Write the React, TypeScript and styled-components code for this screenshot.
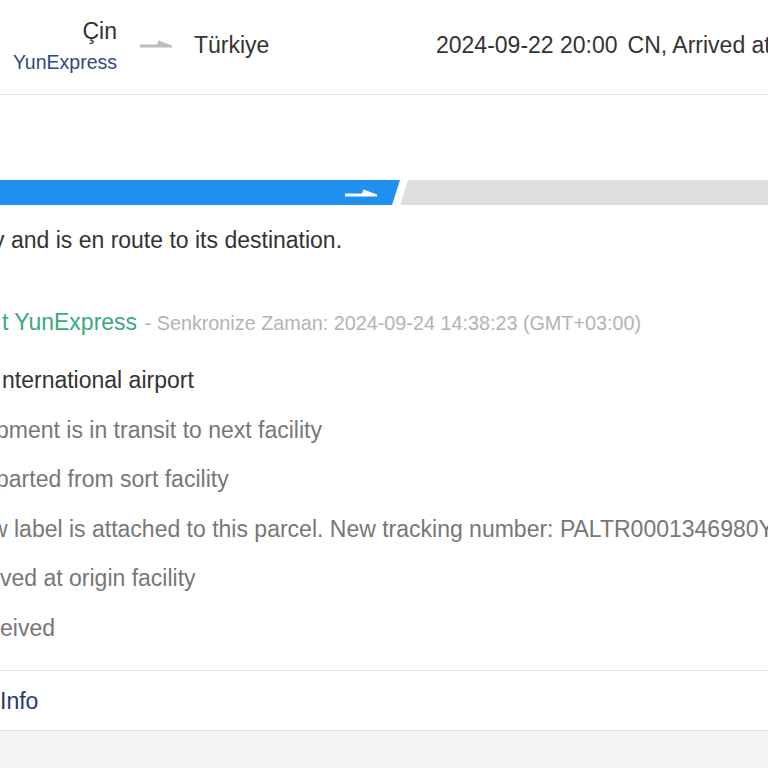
import React from "react";
import styled, { createGlobalStyle } from "styled-components";

const Global = createGlobalStyle`
  html, body { margin: 0; padding: 0; background: #ffffff; }
  body {
    font-family: "Liberation Sans", Arial, sans-serif;
    overflow: hidden;
    width: 768px;
    height: 768px;
  }
`;

const Page = styled.div`
  width: 768px;
  height: 768px;
  display: flex;
  flex-direction: column;
  overflow: hidden;
  background: #f4f4f4;
`;

const Card = styled.div`
  background: #ffffff;
  display: flex;
  flex-direction: column;
`;

const Header = styled.div`
  height: 95px;
  box-sizing: border-box;
  padding-bottom: 4px;
  display: flex;
  align-items: center;
  border-bottom: 1px solid #e2e2e2;
  white-space: nowrap;
  overflow: hidden;
  & > * { flex-shrink: 0; }
`;

const Origin = styled.div`
  width: 117px;
  display: flex;
  flex-direction: column;
  align-items: flex-end;
`;

const Country = styled.div`
  font-size: 23px;
  line-height: 26px;
  color: #333333;
`;

const Carrier = styled.div`
  font-size: 19.5px;
  line-height: 22px;
  margin-top: 7px;
  color: #2b4a86;
`;

const ArrowBox = styled.div`
  margin: 0 22px 0 23px;
  width: 32px;
  height: 10px;
  display: flex;
`;

const Dest = styled(Country)`
  width: 242px;
`;

const Stamp = styled.div`
  font-size: 23px;
  line-height: 26px;
  color: #333333;
  display: flex;
  gap: 10px;
`;

const Body = styled.div`
  padding-top: 85px;
  display: flex;
  flex-direction: column;
`;

const Track = styled.div`
  display: flex;
  height: 25px;
`;

const Done = styled.div`
  width: 400px;
  flex-shrink: 0;
  background: #1f8ff0;
  clip-path: polygon(0 0, 100% 0, calc(100% - 8px) 100%, 0 100%);
  display: flex;
  align-items: center;
  justify-content: flex-end;
  padding-right: 23px;
  box-sizing: border-box;
`;

const Rest = styled.div`
  flex: 1;
  background: #dedede;
  clip-path: polygon(8px 0, 100% 0, 100% 100%, 0 100%);
`;

const Line = styled.div<{ $shift: number; $color?: string; $size?: number }>`
  margin-left: ${(p) => p.$shift}px;
  font-size: ${(p) => p.$size ?? 23}px;
  line-height: 26px;
  color: ${(p) => p.$color ?? "#333333"};
  white-space: nowrap;
`;

const Summary = styled(Line)`
  margin-top: 22px;
`;

const Source = styled(Line)`
  margin-top: 56px;
`;

const Green = styled.span`
  color: #3aa97c;
`;

const Sync = styled.span`
  color: #b3b3b3;
  font-size: 19.8px;
  margin-left: 2px;
`;

const Events = styled.div`
  margin-top: 31px;
  display: flex;
  flex-direction: column;
  gap: 23.5px;
  padding-bottom: 29px;
  border-bottom: 1px solid #e2e2e2;
`;

const Footer = styled.div`
  height: 60px;
  display: flex;
  align-items: center;
  border-bottom: 1px solid #e2e2e2;
  padding-top: 2px;
  box-sizing: border-box;
`;

const Harpoon = ({ color }: { color: string }) => (
  <svg width="32" height="8" viewBox="0 0 32 8">
    <polygon points="0,4.5 17,4.5 18.5,0.5 32,5.5 32,7.5 0,7.5" fill={color} />
  </svg>
);

const events: { text: string; shift: number; color: string }[] = [
  { text: "nternational airport", shift: 2, color: "#333333" },
  { text: "pment is in transit to next facility", shift: -4, color: "#777777" },
  { text: "parted from sort facility", shift: -4, color: "#777777" },
  {
    text: "w label is attached to this parcel. New tracking number: PALTR0001346980YQ",
    shift: -9,
    color: "#777777",
  },
  { text: "ved at origin facility", shift: 0, color: "#777777" },
  { text: "eived", shift: 0, color: "#777777" },
];

export default function App() {
  return (
    <Page>
      <Global />
      <Card>
        <Header>
          <Origin>
            <Country>Çin</Country>
            <Carrier>YunExpress</Carrier>
          </Origin>
          <ArrowBox>
            <Harpoon color="#bdbdbd" />
          </ArrowBox>
          <Dest>Türkiye</Dest>
          <Stamp>
            <span>2024-09-22 20:00</span>
            <span>CN, Arrived at Istanbul International airport</span>
          </Stamp>
        </Header>
        <Body>
          <Track>
            <Done>
              <Harpoon color="#ffffff" />
            </Done>
            <Rest />
          </Track>
          <Summary $shift={-7}>y and is en route to its destination.</Summary>
          <Source $shift={2}>
            <Green>t YunExpress</Green>
            <Sync> - Senkronize Zaman: 2024-09-24 14:38:23 (GMT+03:00)</Sync>
          </Source>
          <Events>
            {events.map((e, i) => (
              <Line key={i} $shift={e.shift} $color={e.color}>
                {e.text}
              </Line>
            ))}
          </Events>
          <Footer>
            <Line $shift={0} $color="#1f3c70">
              Info
            </Line>
          </Footer>
        </Body>
      </Card>
    </Page>
  );
}
